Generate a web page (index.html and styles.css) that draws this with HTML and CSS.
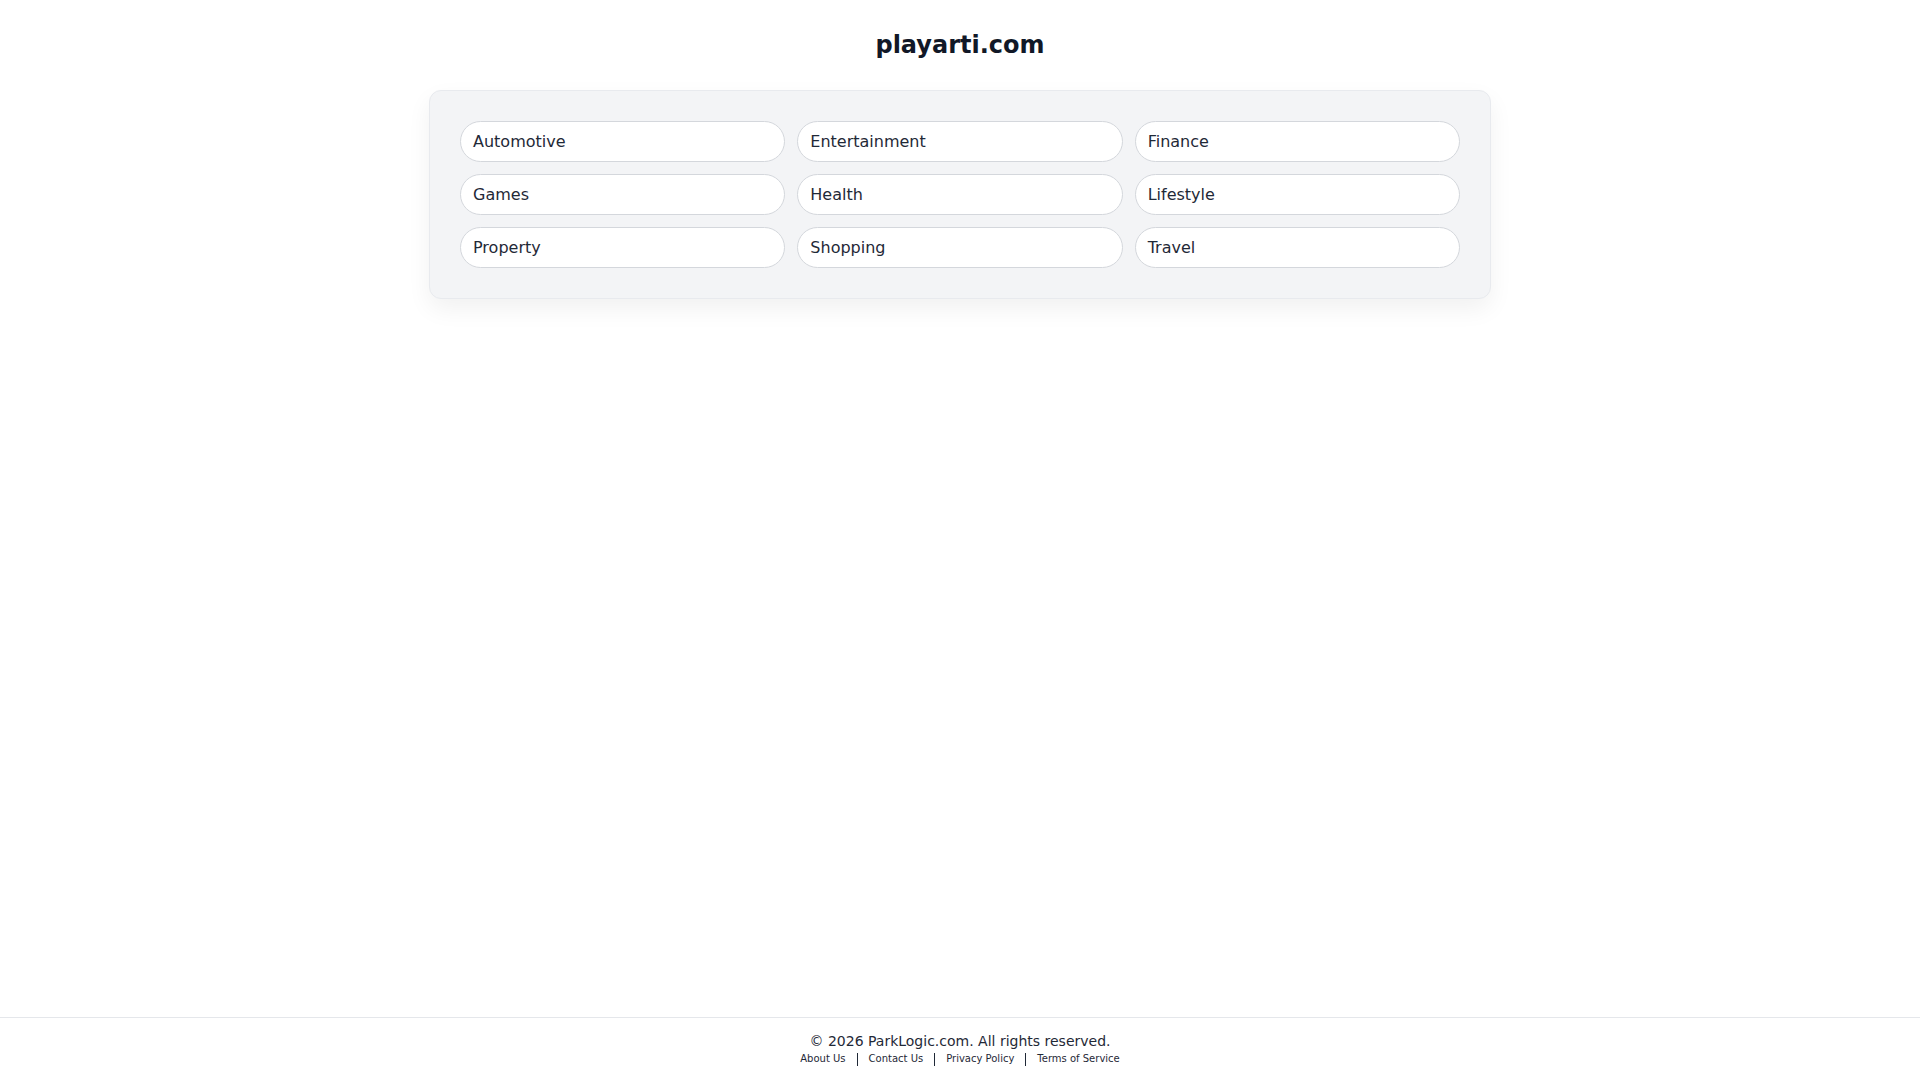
FILE: index.html
```html
<!DOCTYPE html>
<html lang="en">
<head>
<meta charset="utf-8">
<title>playarti.com</title>
<link rel="stylesheet" href="styles.css">
</head>
<body>
<main class="main">
  <h1 class="title">playarti.com</h1>
  <section class="card">
    <div class="grid">
      <a class="pill" href="#">Automotive</a>
      <a class="pill" href="#">Entertainment</a>
      <a class="pill" href="#">Finance</a>
      <a class="pill" href="#">Games</a>
      <a class="pill" href="#">Health</a>
      <a class="pill" href="#">Lifestyle</a>
      <a class="pill" href="#">Property</a>
      <a class="pill" href="#">Shopping</a>
      <a class="pill" href="#">Travel</a>
    </div>
  </section>
</main>
<footer class="footer">
  <div class="copy">© 2026 ParkLogic.com. All rights reserved.</div>
  <nav class="links">
    <a href="#">About Us</a>
    <span class="sep"></span>
    <a href="#">Contact Us</a>
    <span class="sep"></span>
    <a href="#">Privacy Policy</a>
    <span class="sep"></span>
    <a href="#">Terms of Service</a>
  </nav>
</footer>
</body>
</html>
```
FILE: styles.css
```css
* { box-sizing: border-box; }
html, body { margin: 0; padding: 0; }
body {
  min-height: 100vh;
  display: flex;
  flex-direction: column;
  background: #ffffff;
  font-family: "DejaVu Sans", sans-serif;
  color: #1f2937;
}
.main {
  flex: 1;
  padding-top: 29px;
  display: flex;
  flex-direction: column;
  align-items: center;
}
.title {
  margin: 0 0 29px;
  font-size: 24px;
  line-height: 32px;
  font-weight: 700;
  color: #111827;
}
.card {
  width: 1062px;
  background: #f3f4f6;
  border: 1px solid #e8eaee;
  border-radius: 12px;
  padding: 30px;
  box-shadow: 0 10px 24px rgba(0, 0, 0, 0.06);
}
.grid {
  display: grid;
  grid-template-columns: repeat(3, 1fr);
  gap: 12px;
}
.pill {
  display: flex;
  align-items: center;
  height: 41px;
  padding: 0 12px;
  background: #ffffff;
  border: 1px solid #d4d7dc;
  border-radius: 9999px;
  font-size: 16px;
  color: #1f2937;
  text-decoration: none;
}
.footer {
  border-top: 1px solid #e5e7eb;
  padding: 13px 0 13px;
  text-align: center;
}
.copy {
  font-size: 14px;
  line-height: 20px;
  color: #1f2937;
}
.links {
  display: flex;
  justify-content: center;
  align-items: center;
  gap: 11px;
  height: 16px;
  font-size: 10px;
  line-height: 16px;
}
.links a {
  color: #1f2937;
  text-decoration: none;
}
.sep {
  display: inline-block;
  width: 0;
  height: 13px;
  border-left: 1.5px solid #1f2937;
}
```
